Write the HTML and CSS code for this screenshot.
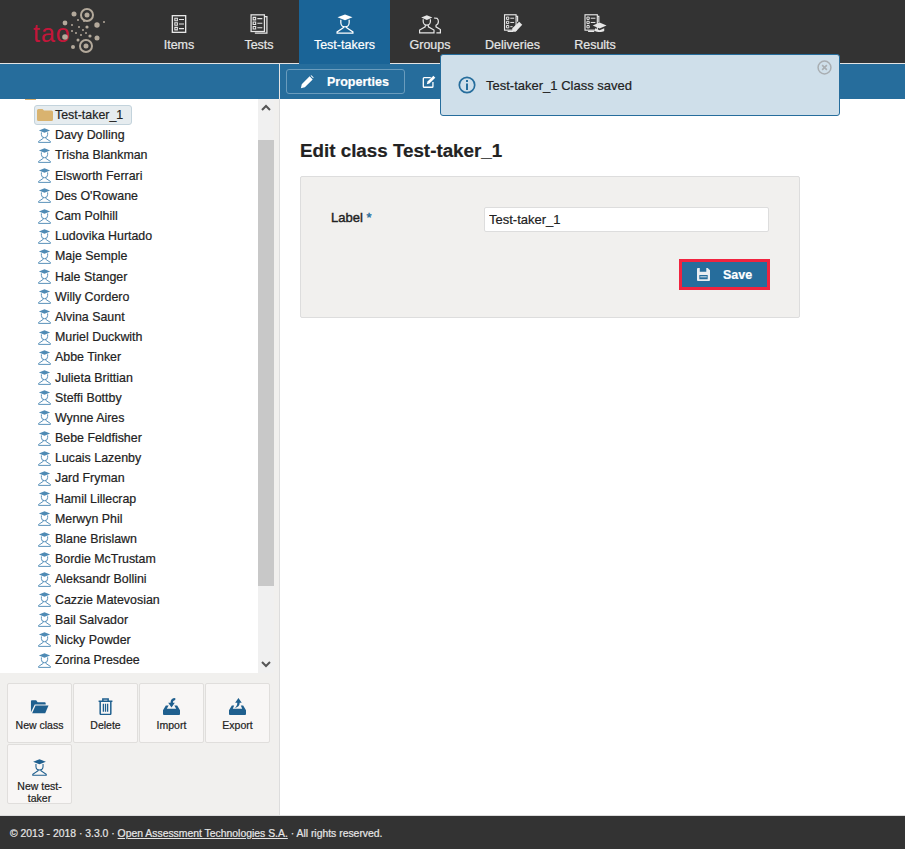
FILE: index.html
```html
<!doctype html>
<html lang="en">
  <head>
    <meta charset="UTF-8" />
    <title>TAO - Test-takers</title>
    <link rel="stylesheet" href="styles.css">
  </head>
  <body>
    <svg class="sprites" width="0" height="0">
      <symbol id="i-items" viewBox="0 0 24 24" fill="none" stroke="currentColor" stroke-width="1.6">
        <rect x="4" y="2" width="16" height="20" />
        <path d="M7 5h3v3H7zM7 10.5h3v3H7zM7 16h3v3H7zM12 6.5h6M12 12h6M12 17.500h6" stroke-width="1.300" />
      </symbol>
      <symbol id="i-tests" viewBox="0 0 24 24" fill="none" stroke="currentColor" stroke-width="1.500">
        <path d="M19 3h2.500v20H7" />
        <rect x="2.500" y="1" width="16" height="20" />
        <path d="M5 4h3v3H5zM5 9.500h3v3H5zM5 15h3v3H5zM10 5.500h6M10 11h6M10 16.500h6" stroke-width="1.300" />
      </symbol>
      <symbol id="i-taker" viewBox="0 0 24 24" fill="none" stroke="currentColor" stroke-width="1.500">
        <path d="M12 .5l9 3.500-9 3.500L3 4z" fill="currentColor" stroke="none" />
        <path d="M7 7v3.500a5 5 0 0 0 10 0V7" />
        <path d="M10 15v1.500L2.500 21.500V23h19v-1.500L14 16.500V15" />
      </symbol>
      <symbol id="i-groups" viewBox="0 0 30 24" fill="none" stroke="currentColor" stroke-width="1.500">
        <path d="M11 1l7 3-7 3-7-3z" fill="currentColor" stroke="none" />
        <path d="M6.500 6v3a4.500 4.500 0 0 0 9 0V6M9 14v1.500L2 19.500V23h18v-3.500l-7-4V14" />
        <path d="M20 4.500l4 .5c1.500 1 1.500 2 1.500 4 0 2.500-1.500 4-3 4.500v2l5.500 3.500V23h-5" />
      </symbol>
      <symbol id="i-deliveries" viewBox="0 0 26 26" fill="none" stroke="currentColor" stroke-width="1.500">
        <path d="M17 3h2v7M6 22.500h7" />
        <rect x="2" y="1" width="15" height="20" />
        <path d="M4.500 4h3v3h-3zM4.500 9.500h3v3h-3zM4.500 15h3v3h-3zM9.500 5.500h5M9.500 11h5M9.500 16.500h3" stroke-width="1.300" />
        <path d="M21 10l4 4-8.500 9H12v-4.500z" fill="currentColor" stroke="none" />
      </symbol>
      <symbol id="i-results" viewBox="0 0 30 26" fill="none" stroke="currentColor" stroke-width="1.500">
        <path d="M18 3h2v8M6 22.500h8" />
        <rect x="2" y="1" width="16" height="20" />
        <path d="M4.500 4h3v3h-3zM4.500 9.500h3v3h-3zM4.500 15h3v3h-3zM9.500 5.500h6M9.500 11h6" stroke-width="1.300" />
        <path d="M21 11l9 4-9 4-9-4z" fill="currentColor" stroke="none" />
        <path d="M15 18.500v3.500c3 2 9 2 12 0v-3.500l-6 2.500z" fill="currentColor" stroke="none" />
      </symbol>
      <symbol id="i-pencil" viewBox="0 0 16 16">
        <path d="M11 1.500l3.500 3.500L5.500 14 1 15l1-4.500zM12 .8l1-.6 2.600 2.600-.6 1z" fill="currentColor" />
      </symbol>
      <symbol id="i-edit" viewBox="0 0 16 16" fill="none" stroke="currentColor" stroke-width="1.500">
        <path d="M10 3H2.500a1 1 0 0 0-1 1v9a1 1 0 0 0 1 1h9a1 1 0 0 0 1-1V8" />
        <path d="M13 .8L15.200 3 8.500 9.700 5.500 10.500 6.300 7.500z" fill="currentColor" stroke="none" />
      </symbol>
      <symbol id="i-folder" viewBox="0 0 16 14">
        <path d="M0 2.500A1.500 1.500 0 0 1 1.500 1h4L7 2.500h7.500A1.500 1.500 0 0 1 16 4v7.500a1.500 1.500 0 0 1-1.500 1.500h-13A1.500 1.500 0 0 1 0 11.500z" fill="currentColor" />
      </symbol>
      <symbol id="i-folder-open" viewBox="0 0 20 16">
        <path d="M1 14V2.500A1 1 0 0 1 2 1.500h4.500L8 3.500h7.500a1 1 0 0 1 1 1V6H5L1 14z" fill="currentColor" />
        <path d="M5.800 7H19.500L16 15H2.300z" fill="currentColor" />
      </symbol>
      <symbol id="i-trash" viewBox="0 0 14 16" fill="none" stroke="currentColor" stroke-width="1.400">
        <path d="M.5 3h13M4.500 3V1h5v2M2 3v11.500a1 1 0 0 0 1 1h8a1 1 0 0 0 1-1V3" />
        <path d="M5 5.500v7.500M7 5.500v7.500M9 5.500v7.500" stroke-width="1.200" />
      </symbol>
      <symbol id="i-import" viewBox="0 0 18 18">
        <path d="M3 8h3L4 11.500h10L12 8h3l3 5v4a1 1 0 0 1-1 1H1a1 1 0 0 1-1-1v-4z" fill="currentColor" />
        <path d="M13 0C9.500 0 8 2 8 5H5.500L9 10l3.500-5h-2c0-1.500.6-2.600 2.500-3z" fill="currentColor" />
      </symbol>
      <symbol id="i-export" viewBox="0 0 18 18">
        <path d="M3 8h2.500L4 11.500h10L12.500 8H15l3 5v4a1 1 0 0 1-1 1H1a1 1 0 0 1-1-1v-4z" fill="currentColor" />
        <path d="M10 0l3.500 5H11.300c0 3-1.800 5-5.300 5.500 1.800-1.200 2.800-3 2.800-5.500H6.500z" fill="currentColor" />
      </symbol>
      <symbol id="i-save" viewBox="0 0 14 14">
        <path d="M0 1a1 1 0 0 1 1-1h10.500L14 2.500V13a1 1 0 0 1-1 1H1a1 1 0 0 1-1-1z" fill="currentColor" />
        <path d="M3 0h7v4H3zM2.500 7.500h9V12h-9z" fill="#266d9c" />
        <path d="M3.500 9h7v1h-7z" fill="currentColor" />
      </symbol>
      <symbol id="i-info" viewBox="0 0 18 18">
        <circle cx="9" cy="9" r="7.700" fill="none" stroke="currentColor" stroke-width="1.700" />
        <path d="M8 4h2v2H8zM8 7.500h2V14H8z" fill="currentColor" />
      </symbol>
      <symbol id="i-close" viewBox="0 0 14 14" fill="none" stroke="currentColor">
        <circle cx="7" cy="7" r="6" stroke-width="1.400" />
        <path d="M4.800 4.800l4.400 4.400M9.200 4.800L4.800 9.200" stroke-width="1.500" />
      </symbol>
    </svg>

    <header class="topbar">
      <a class="logo">
        <svg width="139" height="63" viewBox="0 0 139 63">
          <text x="33" y="42" class="logo-text">tao</text>
          <g fill="none" stroke="#b3a99b" stroke-width="2">
            <circle cx="87" cy="15" r="6" />
            <circle cx="86" cy="46" r="6" />
          </g>
          <g fill="#b3a99b">
            <circle cx="87" cy="15" r="2.500" />
            <circle cx="86" cy="46" r="2.500" />
            <circle cx="74" cy="14" r="2.500" />
            <circle cx="65" cy="23" r="2.400" />
            <circle cx="65" cy="37" r="2.800" />
            <circle cx="97" cy="25" r="2.700" />
            <circle cx="87" cy="27" r="1.600" />
            <circle cx="97" cy="38" r="2.500" />
            <circle cx="90" cy="36" r="1.600" />
            <circle cx="73" cy="47" r="2" />
            <circle cx="78" cy="40" r="1.500" />
            <circle cx="72" cy="25" r="1" />
            <circle cx="78" cy="20" r="1" />
            <circle cx="84" cy="21" r="1" />
            <circle cx="79" cy="27" r="1" />
            <circle cx="83" cy="30" r="1" />
            <circle cx="76" cy="33" r="1" />
            <circle cx="81" cy="35" r="1" />
            <circle cx="86" cy="33" r="1" />
            <circle cx="72" cy="31" r="1" />
            <circle cx="104" cy="22" r="1" />
          </g>
        </svg>
      </a>
      <nav class="main-nav">
        <a class="nav-tab"><svg class="nav-icon"><use href="#i-items" /></svg>Items</a>
        <a class="nav-tab"><svg class="nav-icon"><use href="#i-tests" /></svg>Tests</a>
        <a class="nav-tab nav-tab-active"><svg class="nav-icon"><use href="#i-taker" /></svg>Test-takers</a>
        <a class="nav-tab"><svg class="nav-icon"><use href="#i-groups" /></svg>Groups</a>
        <a class="nav-tab nav-tab-wide"><svg class="nav-icon"><use href="#i-deliveries" /></svg>Deliveries</a>
        <a class="nav-tab"><svg class="nav-icon"><use href="#i-results" /></svg>Results</a>
      </nav>
    </header>

    <div class="subbar">
      <div class="subbar-left"></div>
      <div class="subbar-tabs">
        <a class="sub-tab"><svg class="sub-icon"><use href="#i-pencil" /></svg>Properties</a>
        <svg class="sub-icon sub-icon-edit"><use href="#i-edit" /></svg>
      </div>
    </div>

    <div class="feedback">
      <svg class="feedback-icon"><use href="#i-info" /></svg>
      <span>Test-taker_1 Class saved</span>
      <svg class="feedback-close"><use href="#i-close" /></svg>
    </div>

    <main class="main">
      <aside class="sidebar">
        <div class="tree-wrap">
          <div class="tree">
            <div class="tree-root"></div>
            <div class="tree-row tree-row-class"><span class="tree-selected"><svg class="folder-icon"><use href="#i-folder" /></svg>Test-taker_1</span></div>
            <div class="tree-row"><svg class="taker-icon"><use href="#i-taker" /></svg>Davy Dolling</div>
            <div class="tree-row"><svg class="taker-icon"><use href="#i-taker" /></svg>Trisha Blankman</div>
            <div class="tree-row"><svg class="taker-icon"><use href="#i-taker" /></svg>Elsworth Ferrari</div>
            <div class="tree-row"><svg class="taker-icon"><use href="#i-taker" /></svg>Des O'Rowane</div>
            <div class="tree-row"><svg class="taker-icon"><use href="#i-taker" /></svg>Cam Polhill</div>
            <div class="tree-row"><svg class="taker-icon"><use href="#i-taker" /></svg>Ludovika Hurtado</div>
            <div class="tree-row"><svg class="taker-icon"><use href="#i-taker" /></svg>Maje Semple</div>
            <div class="tree-row"><svg class="taker-icon"><use href="#i-taker" /></svg>Hale Stanger</div>
            <div class="tree-row"><svg class="taker-icon"><use href="#i-taker" /></svg>Willy Cordero</div>
            <div class="tree-row"><svg class="taker-icon"><use href="#i-taker" /></svg>Alvina Saunt</div>
            <div class="tree-row"><svg class="taker-icon"><use href="#i-taker" /></svg>Muriel Duckwith</div>
            <div class="tree-row"><svg class="taker-icon"><use href="#i-taker" /></svg>Abbe Tinker</div>
            <div class="tree-row"><svg class="taker-icon"><use href="#i-taker" /></svg>Julieta Brittian</div>
            <div class="tree-row"><svg class="taker-icon"><use href="#i-taker" /></svg>Steffi Bottby</div>
            <div class="tree-row"><svg class="taker-icon"><use href="#i-taker" /></svg>Wynne Aires</div>
            <div class="tree-row"><svg class="taker-icon"><use href="#i-taker" /></svg>Bebe Feldfisher</div>
            <div class="tree-row"><svg class="taker-icon"><use href="#i-taker" /></svg>Lucais Lazenby</div>
            <div class="tree-row"><svg class="taker-icon"><use href="#i-taker" /></svg>Jard Fryman</div>
            <div class="tree-row"><svg class="taker-icon"><use href="#i-taker" /></svg>Hamil Lillecrap</div>
            <div class="tree-row"><svg class="taker-icon"><use href="#i-taker" /></svg>Merwyn Phil</div>
            <div class="tree-row"><svg class="taker-icon"><use href="#i-taker" /></svg>Blane Brislawn</div>
            <div class="tree-row"><svg class="taker-icon"><use href="#i-taker" /></svg>Bordie McTrustam</div>
            <div class="tree-row"><svg class="taker-icon"><use href="#i-taker" /></svg>Aleksandr Bollini</div>
            <div class="tree-row"><svg class="taker-icon"><use href="#i-taker" /></svg>Cazzie Matevosian</div>
            <div class="tree-row"><svg class="taker-icon"><use href="#i-taker" /></svg>Bail Salvador</div>
            <div class="tree-row"><svg class="taker-icon"><use href="#i-taker" /></svg>Nicky Powder</div>
            <div class="tree-row"><svg class="taker-icon"><use href="#i-taker" /></svg>Zorina Presdee</div>
          </div>
          <div class="scroll">
            <svg class="scroll-arrow" width="10" height="7" viewBox="0 0 10 7"><path d="M1 6l4-4 4 4" fill="none" stroke="#555" stroke-width="2" /></svg>
            <div class="scroll-thumb"></div>
            <svg class="scroll-arrow scroll-arrow-down" width="10" height="7" viewBox="0 0 10 7"><path d="M1 1l4 4 4-4" fill="none" stroke="#555" stroke-width="2" /></svg>
          </div>
        </div>
        <div class="actions">
          <a class="action"><svg class="action-icon"><use href="#i-folder-open" /></svg>New class</a>
          <a class="action"><svg class="action-icon"><use href="#i-trash" /></svg>Delete</a>
          <a class="action"><svg class="action-icon"><use href="#i-import" /></svg>Import</a>
          <a class="action"><svg class="action-icon"><use href="#i-export" /></svg>Export</a>
          <a class="action"><svg class="action-icon"><use href="#i-taker" /></svg>New test-taker</a>
        </div>
      </aside>

      <section class="content">
        <h1 class="title">Edit class Test-taker_1</h1>
        <form class="panel">
          <div class="field">
            <label class="field-label">Label <abbr>*</abbr></label>
            <input class="field-input" type="text" value="Test-taker_1" />
          </div>
          <div class="form-actions">
            <button class="save" type="button"><svg class="save-icon"><use href="#i-save" /></svg>Save</button>
          </div>
        </form>
      </section>
    </main>

    <footer class="footer">© 2013 - 2018 · 3.3.0 · <a>Open Assessment Technologies S.A.</a> · All rights reserved.</footer>
  </body>
</html>
```

FILE: styles.css
```css
* {
  box-sizing: border-box;
}
html,
body {
  margin: 0;
  height: 100%;
  overflow: hidden;
}
body {
  display: flex;
  flex-direction: column;
  position: relative;
  font-family: "Liberation Sans", Arial, sans-serif;
  font-size: 13px;
  color: #222;
  background: #fff;
  -webkit-text-stroke: 0.2px;
}
.sprites {
  position: absolute;
}

/* top bar */
.topbar {
  display: flex;
  flex: none;
  height: 64px;
  background: #333;
  border-bottom: 1px solid #e4e4e4;
}
.logo {
  width: 139px;
}
.logo-text {
  font-family: "Liberation Sans", Arial, sans-serif;
  font-size: 25px;
  letter-spacing: 1px;
  fill: #c3163a;
}
.main-nav {
  display: flex;
}
.nav-tab {
  display: flex;
  flex-direction: column;
  align-items: center;
  min-width: 80px;
  padding: 14px 14px 0;
  color: #e6e6e6;
  font-size: 12.500px;
}
.nav-tab-active {
  width: 91px;
  background: #1a6497;
  color: #fff;
  margin-bottom: -1px;
}
.nav-tab-wide {
  width: 85px;
}
.nav-icon {
  width: 24px;
  height: 20px;
  margin-bottom: 4px;
}

/* blue bar */
.subbar {
  display: flex;
  flex: none;
  height: 35px;
  background: #266d9c;
}
.subbar-left {
  width: 280px;
  border-right: 1px solid #e4e4e4;
}
.subbar-tabs {
  display: flex;
  align-items: center;
  padding-left: 6px;
  color: #fff;
}
.sub-tab {
  display: flex;
  align-items: center;
  width: 119px;
  height: 25px;
  padding-left: 13px;
  border: 1px solid #6a9cbd;
  border-radius: 3px;
  font-size: 12.500px;
  font-weight: bold;
}
.sub-icon {
  width: 14px;
  height: 14px;
  margin-right: 13px;
}
.sub-icon-edit {
  margin-left: 17px;
}

/* notification */
.feedback {
  position: absolute;
  top: 54px;
  left: 440px;
  display: flex;
  align-items: center;
  width: 400px;
  height: 62px;
  padding-left: 17px;
  background: #cfdfea;
  border: 1px solid #266d9c;
  border-radius: 3px;
  font-size: 13px;
  z-index: 2;
}
.feedback-icon {
  width: 18px;
  height: 18px;
  margin-right: 10px;
  color: #266d9c;
}
.feedback-close {
  position: absolute;
  top: 5px;
  right: 7px;
  width: 15px;
  height: 15px;
  color: #a9aeb2;
}

/* layout */
.main {
  display: flex;
  flex: 1;
  min-height: 0;
}
.sidebar {
  display: flex;
  flex-direction: column;
  flex: none;
  width: 280px;
  background: #f1f0ee;
  border-right: 1px solid #ddd;
}

/* tree */
.tree-wrap {
  display: flex;
  height: 574px;
}
.tree {
  width: 258px;
  background: #fff;
  overflow: hidden;
}
.tree-root {
  width: 11px;
  height: 1px;
  margin-left: 25px;
  background: #d8ae6d;
}
.tree-row {
  display: flex;
  align-items: center;
  height: 20.200px;
  padding-left: 37px;
  font-size: 12.400px;
  white-space: nowrap;
}
.tree-row-class {
  height: 20px;
  margin-top: 5.200px;
  padding-left: 34px;
}
.tree-selected {
  display: flex;
  align-items: center;
  width: 98px;
  height: 20px;
  padding-left: 2px;
  background: #e6ecef;
  border: 1px solid #c3d3dc;
  border-radius: 3px;
}
.folder-icon {
  width: 16px;
  height: 14px;
  margin-right: 2px;
  color: #d9b36f;
}
.taker-icon {
  width: 15px;
  height: 15px;
  margin-right: 3px;
  color: #4f8bb5;
}
.scroll {
  position: relative;
  width: 16px;
  background: #f0f0f0;
  padding-top: 41px;
}
.scroll-thumb {
  height: 446px;
  background: #c8c8c8;
}
.scroll-arrow {
  position: absolute;
  top: 5px;
  left: 3px;
}
.scroll-arrow-down {
  top: auto;
  bottom: 5px;
}

/* action buttons */
.actions {
  display: grid;
  grid-template-columns: repeat(4, 65px);
  grid-auto-rows: 60px;
  gap: 1px;
  padding: 10px 0 0 7px;
}
.action {
  display: flex;
  flex-direction: column;
  align-items: center;
  padding: 14px 4px 0;
  background: #f8f6f5;
  border: 1px solid #e0dedc;
  border-radius: 2px;
  font-size: 10.500px;
  line-height: 12px;
  text-align: center;
}
.action-icon {
  flex: none;
  width: 19px;
  height: 17px;
  margin-bottom: 4px;
  color: #1f5f8e;
}

/* edit form */
.content {
  flex: 1;
  padding-left: 20px;
}
.title {
  margin: 40px 0 14px;
  font-size: 18.800px;
  line-height: 23px;
  font-weight: bold;
  color: #222;
}
.panel {
  width: 500px;
  height: 142px;
  padding: 30px 30px 0;
  background: #f1f0ee;
  border: 1px solid #ddd;
  border-radius: 2px;
}
.field {
  display: flex;
  align-items: flex-start;
}
.field-label {
  width: 153px;
  padding-top: 3px;
  font-size: 13px;
  -webkit-text-stroke: 0.4px;
}
.field-label abbr {
  color: #266d9c;
}
.field-input {
  width: 285px;
  height: 25px;
  padding: 0 4px;
  border: 1px solid #ddd;
  border-radius: 2px;
  font: 13px "Liberation Sans", Arial, sans-serif;
  color: #222;
}
.form-actions {
  display: flex;
  justify-content: flex-end;
  margin: 27px -1px 0 0;
}
.save {
  display: flex;
  align-items: center;
  width: 91px;
  height: 31px;
  padding: 0 0 0 15px;
  background: #266d9c;
  border: 3px solid #f0243f;
  font: bold 12.500px "Liberation Sans", Arial, sans-serif;
  color: #fff;
}
.save-icon {
  width: 13px;
  height: 13px;
  margin-right: 13px;
  color: #e9eef2;
}

/* footer */
.footer {
  display: flex;
  align-items: center;
  flex: none;
  height: 34px;
  padding: 1px 0 0 10px;
  background: #333;
  border-top: 1px solid #ddd;
  color: #e6e6e6;
  font-size: 10.400px;
  white-space: pre;
}
.footer a {
  text-decoration: underline;
}
```
